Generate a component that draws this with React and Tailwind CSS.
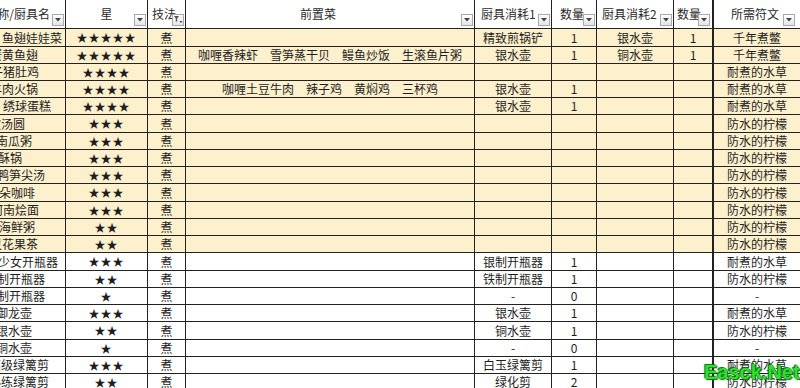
const FONT = "font-['Noto_Sans_CJK_SC',sans-serif]";

const ROWS = [
  { n: '鱼翅娃娃菜', pr: 'pr-[3px]', s: 5, pre: '', t1: '精致煎锅铲', q1: '1', t2: '银水壶', q2: '1', rune: '千年煮鳖', h: 'h-[18px]' },
  { n: '蟹黄鱼翅', pr: 'pr-[27px]', s: 5, pre: '咖喱香辣虾\u3000雪笋蒸干贝\u3000鳗鱼炒饭\u3000生滚鱼片粥', t1: '银水壶', q1: '1', t2: '铜水壶', q2: '1', rune: '千年煮鳖', h: 'h-[17px]' },
  { n: '椰子猪肚鸡', pr: 'pr-[26px]', s: 4, pre: '', t1: '', q1: '', t2: '', q2: '', rune: '耐煮的水草', h: 'h-[17px]' },
  { n: '羊肉火锅', pr: 'pr-[27px]', s: 4, pre: '咖喱土豆牛肉\u3000辣子鸡\u3000黄焖鸡\u3000三杯鸡', t1: '银水壶', q1: '1', t2: '', q2: '', rune: '耐煮的水草', h: 'h-[17px]' },
  { n: '绣球蛋糕', pr: 'pr-[14px]', s: 4, pre: '', t1: '银水壶', q1: '1', t2: '', q2: '', rune: '耐煮的水草', h: 'h-[17px]' },
  { n: '宁波汤圆', pr: 'pr-[40px]', s: 3, pre: '', t1: '', q1: '', t2: '', q2: '', rune: '防水的柠檬', h: 'h-[18px]' },
  { n: '老南瓜粥', pr: 'pr-[33px]', s: 3, pre: '', t1: '', q1: '', t2: '', q2: '', rune: '防水的柠檬', h: 'h-[17px]' },
  { n: '博山酥锅', pr: 'pr-[43px]', s: 3, pre: '', t1: '', q1: '', t2: '', q2: '', rune: '防水的柠檬', h: 'h-[17px]' },
  { n: '老鸭笋尖汤', pr: 'pr-[20px]', s: 3, pre: '', t1: '', q1: '', t2: '', q2: '', rune: '防水的柠檬', h: 'h-[17px]' },
  { n: '花朵咖啡', pr: 'pr-[30px]', s: 3, pre: '', t1: '', q1: '', t2: '', q2: '', rune: '防水的柠檬', h: 'h-[18px]' },
  { n: '河南烩面', pr: 'pr-[26px]', s: 3, pre: '', t1: '', q1: '', t2: '', q2: '', rune: '防水的柠檬', h: 'h-[17px]' },
  { n: '潮汕海鲜粥', pr: 'pr-[30px]', s: 2, pre: '', t1: '', q1: '', t2: '', q2: '', rune: '防水的柠檬', h: 'h-[17px]' },
  { n: '精灵花果茶', pr: 'pr-[27px]', s: 2, pre: '', t1: '', q1: '', t2: '', q2: '', rune: '防水的柠檬', h: 'h-[17px]' },
  { n: '美少女开瓶器', pr: 'pr-[7px]', s: 3, pre: '', t1: '银制开瓶器', q1: '1', t2: '', q2: '', rune: '耐煮的水草', h: 'h-[18px]' },
  { n: '银制开瓶器', pr: 'pr-[20px]', s: 2, pre: '', t1: '铁制开瓶器', q1: '1', t2: '', q2: '', rune: '防水的柠檬', h: 'h-[17px]' },
  { n: '铁制开瓶器', pr: 'pr-[20px]', s: 1, pre: '', t1: '-', q1: '0', t2: '', q2: '', rune: '-', h: 'h-[17px]' },
  { n: '御龙壶', pr: 'pr-[33px]', s: 3, pre: '', t1: '银水壶', q1: '1', t2: '', q2: '', rune: '耐煮的水草', h: 'h-[17px]' },
  { n: '银水壶', pr: 'pr-[33px]', s: 2, pre: '', t1: '铜水壶', q1: '1', t2: '', q2: '', rune: '防水的柠檬', h: 'h-[18px]' },
  { n: '铜水壶', pr: 'pr-[33px]', s: 1, pre: '', t1: '-', q1: '0', t2: '', q2: '', rune: '-', h: 'h-[17px]' },
  { n: '高级绿篱剪', pr: 'pr-[16px]', s: 3, pre: '', t1: '白玉绿篱剪', q1: '1', t2: '', q2: '', rune: '耐煮的水草', h: 'h-[17px]' },
  { n: '熟练绿篱剪', pr: 'pr-[16px]', s: 2, pre: '', t1: '绿化剪', q1: '2', t2: '', q2: '', rune: '防水的柠檬', h: 'h-[17px]' },
];

const cell = 'shrink-0 flex items-center overflow-hidden whitespace-nowrap border-r border-[#222]';

function FilterBtn({ pos = 'right-[1px]', funnel }) {
  return (
    <span className={`absolute bottom-[2px] ${pos} w-[12px] h-[12px] border border-[#a9a9a9] bg-linear-to-b from-white to-[#e4e4e4] flex items-center justify-center`}>
      {funnel ? (
        <svg width="10" height="10" viewBox="0 0 10 10">
          <path d="M1 1h5L4.2 3.4V6L2.8 7V3.4z" fill="#555" />
          <path d="M6.5 6h3L8 8z" fill="#444" />
        </svg>
      ) : (
        <svg width="6" height="4" viewBox="0 0 6 4">
          <path d="M0 0h6L3 3.5z" fill="#444" />
        </svg>
      )}
    </span>
  );
}

function HeadCell({ w, children, align = 'justify-center', pad = '', btn, funnel }) {
  return (
    <div className={`relative ${w} ${cell} ${align} ${pad}`}>
      <span>{children}</span>
      <FilterBtn pos={btn} funnel={funnel} />
    </div>
  );
}

function Row({ r, i }) {
  const bg = i < 13 ? 'bg-[#fdf0cd]' : 'bg-white';
  return (
    <div className={`flex ${r.h} ${bg} border-b border-[#222]`}>
      <div className={`w-[66px] ${cell} justify-end ${r.pr}`}>
        <span>{r.n}</span>
      </div>
      <div className={`w-[82px] ${cell} justify-center`}>
        <span className="text-[11px] tracking-[1px]">{'★'.repeat(r.s)}</span>
      </div>
      <div className={`w-[38px] ${cell} justify-center`}>煮</div>
      <div className={`w-[289px] ${cell} justify-center`}>{r.pre}</div>
      <div className={`w-[77px] ${cell} justify-center`}>{r.t1}</div>
      <div className={`w-[45px] ${cell} justify-center`}>{r.q1}</div>
      <div className={`w-[77px] ${cell} justify-center`}>{r.t2}</div>
      <div className={`w-[39px] ${cell} justify-center`}>{r.q2}</div>
      <div className="flex-1 flex items-center justify-center overflow-hidden whitespace-nowrap border-l border-[#222]">
        {r.rune}
      </div>
    </div>
  );
}

export default function App() {
  return (
    <div className={`relative w-[800px] h-[388px] overflow-hidden bg-white text-[12px] leading-none text-[#1e1e1e] ${FONT}`}>
      {/* header */}
      <div className="flex h-[29px] bg-white border-b border-[#222] text-[#2a2a2a]">
        <HeadCell w="w-[66px]" align="justify-end" pad="pr-[15px]">名称/厨具名</HeadCell>
        <HeadCell w="w-[82px]">星</HeadCell>
        <HeadCell w="w-[38px]" align="justify-start" pad="pl-[4px]" funnel>技法</HeadCell>
        <HeadCell w="w-[289px]" pad="pr-[24px]">前置菜</HeadCell>
        <HeadCell w="w-[77px]" align="justify-start" pad="pl-[6px]">厨具消耗1</HeadCell>
        <HeadCell w="w-[45px]" align="justify-start" pad="pl-[8px]">数量</HeadCell>
        <HeadCell w="w-[77px]" align="justify-start" pad="pl-[5px]">厨具消耗2</HeadCell>
        <HeadCell w="w-[39px]" align="justify-start" pad="pl-[3px]" btn="right-[2px]">数量</HeadCell>
        <div className="relative flex-1 flex items-center justify-start pl-[17px] overflow-hidden whitespace-nowrap border-l border-[#222]">
          <span>所需符文</span>
          <FilterBtn pos="right-[5px]" />
        </div>
      </div>

      {ROWS.map((r, i) => (
        <Row key={i} r={r} i={i} />
      ))}

      {/* watermark */}
      <div className="absolute left-[704px] top-[362px] font-['Liberation_Sans',sans-serif] font-bold text-[20px] leading-none text-[#2ee02e] [text-shadow:0_0_1px_#0a6a0a,1px_1px_1px_#0a6a0a,-1px_-1px_1px_#0a6a0a]">
        Easck.Net
      </div>
    </div>
  );
}
